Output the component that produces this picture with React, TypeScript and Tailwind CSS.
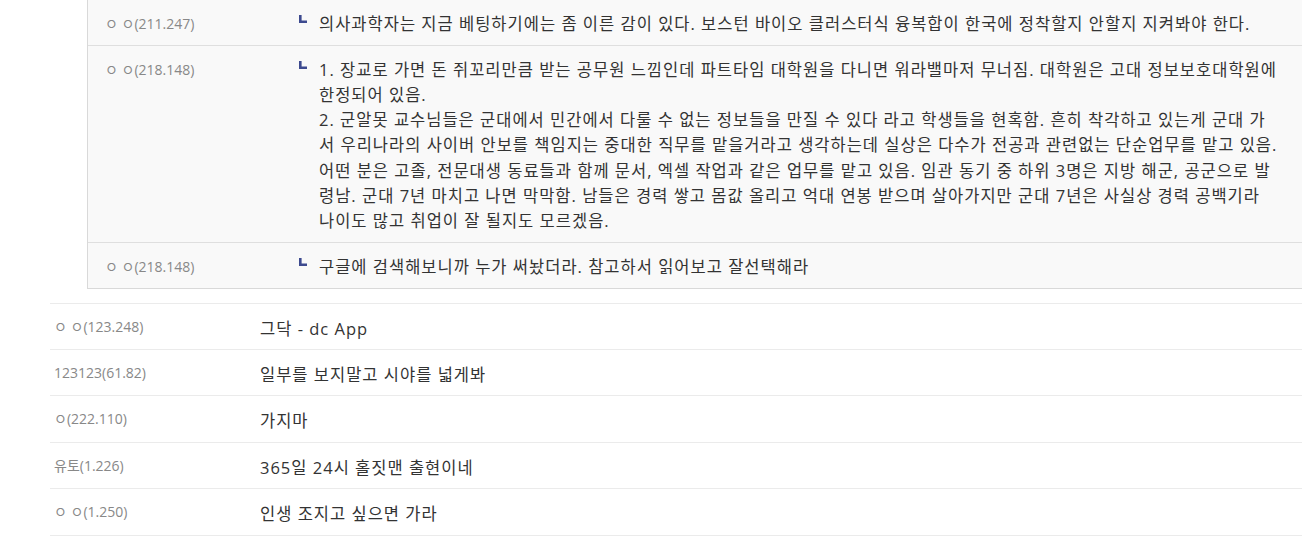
import React from "react";

const replies: { nick: string; lines: string[] }[] = [
  {
    nick: "ㅇ ㅇ(211.247)",
    lines: [
      "의사과학자는 지금 베팅하기에는 좀 이른 감이 있다. 보스턴 바이오 클러스터식 융복합이 한국에 정착할지 안할지 지켜봐야 한다.",
    ],
  },
  {
    nick: "ㅇ ㅇ(218.148)",
    lines: [
      "1. 장교로 가면 돈 쥐꼬리만큼 받는 공무원 느낌인데 파트타임 대학원을 다니면 워라밸마저 무너짐. 대학원은 고대 정보보호대학원에",
      "한정되어 있음.",
      "2. 군알못 교수님들은 군대에서 민간에서 다룰 수 없는 정보들을 만질 수 있다 라고 학생들을 현혹함. 흔히 착각하고 있는게 군대 가",
      "서 우리나라의 사이버 안보를 책임지는 중대한 직무를 맡을거라고 생각하는데 실상은 다수가 전공과 관련없는 단순업무를 맡고 있음.",
      "어떤 분은 고졸, 전문대생 동료들과 함께 문서, 엑셀 작업과 같은 업무를 맡고 있음. 임관 동기 중 하위 3명은 지방 해군, 공군으로 발",
      "령남. 군대 7년 마치고 나면 막막함. 남들은 경력 쌓고 몸값 올리고 억대 연봉 받으며 살아가지만 군대 7년은 사실상 경력 공백기라",
      "나이도 많고 취업이 잘 될지도 모르겠음.",
    ],
  },
  {
    nick: "ㅇ ㅇ(218.148)",
    lines: ["구글에 검색해보니까 누가 써놨더라. 참고하서 읽어보고 잘선택해라"],
  },
];

const comments: { nick: string; text: string }[] = [
  { nick: "ㅇ ㅇ(123.248)", text: "그닥 - dc App" },
  { nick: "123123(61.82)", text: "일부를 보지말고 시야를 넓게봐" },
  { nick: "ㅇ(222.110)", text: "가지마" },
  { nick: "유토(1.226)", text: "365일 24시 홀짓맨 출현이네" },
  { nick: "ㅇ ㅇ(1.250)", text: "인생 조지고 싶으면 가라" },
];

function ReplyIcon() {
  return (
    <svg width="8" height="8" viewBox="0 0 8 8" className="block">
      <rect x="0" y="0" width="2.6" height="8" fill="#3d4a8f" />
      <rect x="0" y="5.5" width="8" height="2.5" fill="#3d4a8f" />
    </svg>
  );
}

export default function App() {
  return (
    <div className="w-[1302px] h-[537px] overflow-hidden bg-white font-['Open_Sans','Noto_Sans_CJK_KR',sans-serif] text-[#333]">
      <div className="pl-[50px]">
        {/* reply box belonging to the previous comment */}
        <div className="pl-[37px] pb-[14px]">
          <div className="border-l border-b border-[#d9d9d9] bg-[#f9f9f9]">
            {replies.map((r, i) => (
              <div
                key={i}
                className={
                  i < replies.length - 1
                    ? "flex pl-[17px] pt-[11px] pb-[8.6px] border-b border-[#dfdfdf]"
                    : "flex pl-[17px] pt-[11px] pb-[8.6px]"
                }
              >
                <div className="w-[193px] shrink-0 text-[14px] leading-[25.2px] text-[#888] whitespace-nowrap">
                  {r.nick}
                </div>
                <div className="w-[21px] shrink-0 pt-[4px] pl-[1px]">
                  <ReplyIcon />
                </div>
                <div className="flex-1 min-w-0 text-[16.5px] leading-[25.2px] tracking-[1px] whitespace-nowrap">
                  {r.lines.map((l, j) => (
                    <div key={j}>{l}</div>
                  ))}
                </div>
              </div>
            ))}
          </div>
        </div>

        {/* main comment list */}
        <div className="border-b border-[#ebebeb]">
          {comments.map((c, i) => (
            <div
              key={i}
              className="flex items-start border-t border-[#ebebeb] pl-[4px] pt-[11px] pb-[8.4px]"
            >
              <div className="w-[206px] shrink-0 text-[14px] leading-[23px] text-[#888] whitespace-nowrap">
                {c.nick}
              </div>
              <div className="flex-1 min-w-0 mt-[1px] text-[16.5px] leading-[25px] tracking-[1px] whitespace-nowrap">
                {c.text}
              </div>
            </div>
          ))}
        </div>
      </div>
    </div>
  );
}
